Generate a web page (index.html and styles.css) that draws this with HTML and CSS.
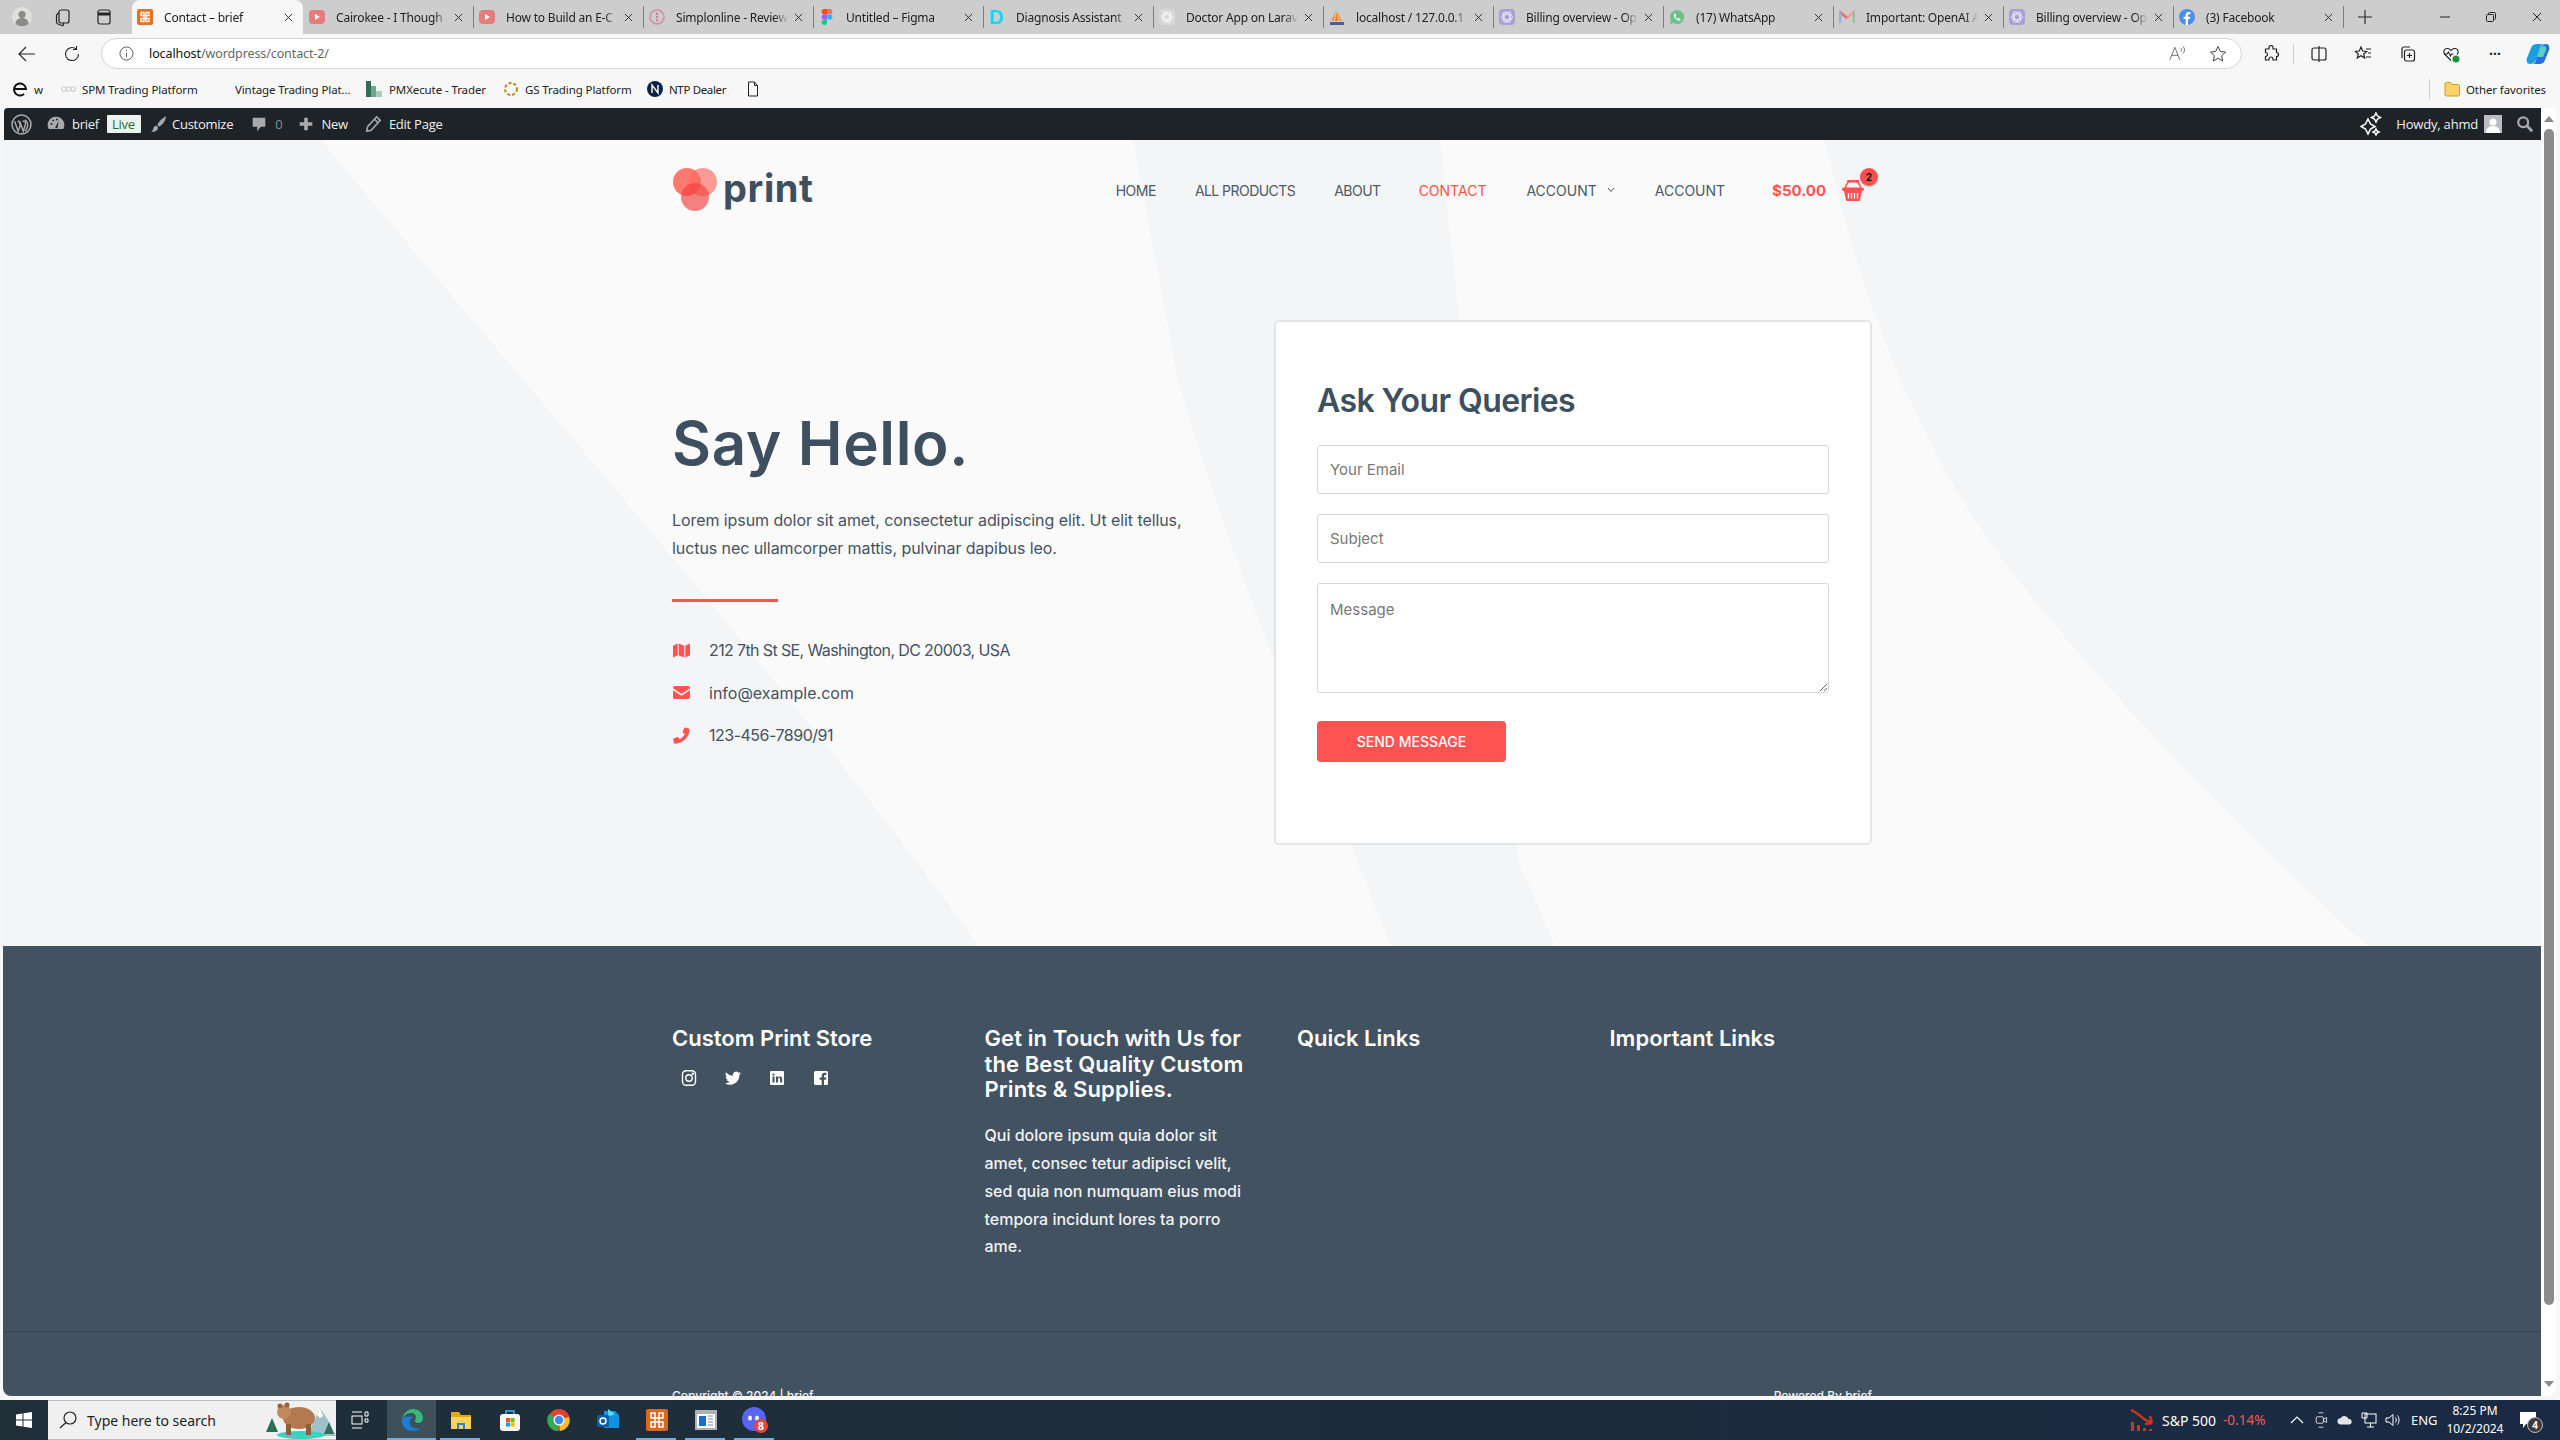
FILE: index.html
```html
<!DOCTYPE html>
<html lang="en">
<head>
<meta charset="utf-8">
<title>Contact – brief</title>
<link rel="stylesheet" href="styles.css">
</head>
<body>
<svg class="defs" width="0" height="0" aria-hidden="true">
  <symbol id="yt" viewBox="0 0 16 16"><rect x="0" y="1" width="16" height="14" rx="4" fill="#e57b7b"/><path d="M6 5l5 3-5 3z" fill="#fff"/></symbol>
  <symbol id="gpt" viewBox="0 0 16 16"><rect width="16" height="16" rx="4" fill="currentColor"/><g fill="none" stroke="#fff" stroke-width="1" opacity=".75"><ellipse cx="8" cy="8" rx="5.5" ry="2.8"/><ellipse cx="8" cy="8" rx="5.5" ry="2.8" transform="rotate(60 8 8)"/><ellipse cx="8" cy="8" rx="5.5" ry="2.8" transform="rotate(120 8 8)"/></g></symbol>
  <symbol id="x" viewBox="0 0 10 10"><path d="M1 1l8 8M9 1l-8 8" stroke="#222" stroke-width="1" fill="none"/></symbol>
</svg>
<div class="app">
  <div class="tabstrip">
    <div class="strip-tools">
      <svg class="ic20" viewBox="0 0 20 20"><circle cx="10" cy="10" r="10" fill="#e0e0dc"/><circle cx="10" cy="7.5" r="3.6" fill="#8a8a86"/><path d="M3.5 17c0-4 3-6 6.500-6s6.500 2 6.500 6a10 10 0 0 1-13 0z" fill="#8a8a86"/></svg>
      <svg class="ic20" viewBox="0 0 20 20" fill="none" stroke="#222" stroke-width="1.200"><rect x="6" y="3" width="10" height="13" rx="2"/><path d="M6 5.500L3.500 8v7c0 1 .6 1.700 1.500 2l4 1.500c1 .3 1.500-.2 1.500-1V16"/></svg>
      <svg class="ic20" viewBox="0 0 20 20" fill="none" stroke="#222" stroke-width="1.200"><rect x="4" y="3" width="12" height="14" rx="2"/><path d="M4 7h12" stroke-width="3"/></svg>
    </div>
    <div class="tab tab-active"><svg class="fav" viewBox="0 0 16 16"><rect width="16" height="16" rx="2" fill="#e9701f"/><path d="M4 3.500h3v3H4zM9 3.500h3v3H9zM4 9.500h3v3H4zM9 9.500h3v3H9zM7 6.500h2v3H7z" fill="none" stroke="#fff" stroke-width="1.300"/></svg><span class="tab-title">Contact – brief</span><svg class="tab-x" viewBox="0 0 10 10"><use href="#x"/></svg></div>
    <div class="tab"><svg class="fav" viewBox="0 0 16 16"><use href="#yt"/></svg><span class="tab-title">Cairokee - I Though</span><svg class="tab-x" viewBox="0 0 10 10"><use href="#x"/></svg></div>
    <div class="tab tab-sep"><svg class="fav" viewBox="0 0 16 16"><use href="#yt"/></svg><span class="tab-title">How to Build an E-C</span><svg class="tab-x" viewBox="0 0 10 10"><use href="#x"/></svg></div>
    <div class="tab tab-sep"><svg class="fav" viewBox="0 0 16 16"><circle cx="8" cy="8" r="7" fill="none" stroke="#d98aa0" stroke-width="1.500"/><circle cx="8" cy="4.800" r="1" fill="#c96a88"/><circle cx="8" cy="8" r="1" fill="#c96a88"/><circle cx="8" cy="11.200" r="1" fill="#c96a88"/></svg><span class="tab-title">Simplonline - Review</span><svg class="tab-x" viewBox="0 0 10 10"><use href="#x"/></svg></div>
    <div class="tab tab-sep"><svg class="fav" viewBox="0 0 12 18"><path d="M3 0h3v6H3a3 3 0 0 1 0-6z" fill="#f24e1e"/><path d="M6 0h3a3 3 0 0 1 0 6H6z" fill="#ff7262"/><path d="M3 6h3v6H3a3 3 0 0 1 0-6z" fill="#a259ff"/><circle cx="9" cy="9" r="3" fill="#1abcfe"/><path d="M3 12h3v3a3 3 0 1 1-3-3z" fill="#0acf83"/></svg><span class="tab-title">Untitled – Figma</span><svg class="tab-x" viewBox="0 0 10 10"><use href="#x"/></svg></div>
    <div class="tab tab-sep"><span class="fav fav-d">D</span><span class="tab-title">Diagnosis Assistant</span><svg class="tab-x" viewBox="0 0 10 10"><use href="#x"/></svg></div>
    <div class="tab tab-sep"><svg class="fav fav-grey" viewBox="0 0 16 16"><use href="#gpt"/></svg><span class="tab-title">Doctor App on Larav</span><svg class="tab-x" viewBox="0 0 10 10"><use href="#x"/></svg></div>
    <div class="tab tab-sep"><svg class="fav" viewBox="0 0 16 16"><path d="M7 1L2 12h3zM8 1l5 11h-3z" fill="#f39c2c"/><path d="M7.500 3L6 12h3z" fill="#e8732c"/><path d="M1 13h14v3H1z" fill="#4a5d9b"/></svg><span class="tab-title">localhost / 127.0.0.1</span><svg class="tab-x" viewBox="0 0 10 10"><use href="#x"/></svg></div>
    <div class="tab tab-sep"><svg class="fav fav-purple" viewBox="0 0 16 16"><use href="#gpt"/></svg><span class="tab-title">Billing overview - Op</span><svg class="tab-x" viewBox="0 0 10 10"><use href="#x"/></svg></div>
    <div class="tab tab-sep"><svg class="fav" viewBox="0 0 16 16"><path d="M8 1a7 7 0 0 0-6 10.500L1 15l3.600-1A7 7 0 1 0 8 1z" fill="#6cc18a"/><path d="M5.500 4.500c-1 1-1 2.500.5 4.500s3.500 3 5 2.500l.6-1.500-2-1-.8.800c-1-.4-2-1.400-2.400-2.400l.8-.8-1-2z" fill="#fff"/></svg><span class="tab-title">(17) WhatsApp</span><svg class="tab-x" viewBox="0 0 10 10"><use href="#x"/></svg></div>
    <div class="tab tab-sep"><svg class="fav" viewBox="0 0 16 16"><path d="M1 14V3l7 6 7-6v11" fill="none" stroke="#e7a09a" stroke-width="2.400"/><path d="M1 3l7 6" stroke="#e57368" stroke-width="2.400"/><path d="M15 3v11" stroke="#8fc29b" stroke-width="2.400"/><path d="M1 3v11" stroke="#8fb0e8" stroke-width="2.400"/></svg><span class="tab-title">Important: OpenAI A</span><svg class="tab-x" viewBox="0 0 10 10"><use href="#x"/></svg></div>
    <div class="tab tab-sep"><svg class="fav fav-purple" viewBox="0 0 16 16"><use href="#gpt"/></svg><span class="tab-title">Billing overview - Op</span><svg class="tab-x" viewBox="0 0 10 10"><use href="#x"/></svg></div>
    <div class="tab tab-sep"><svg class="fav" viewBox="0 0 16 16"><circle cx="8" cy="8" r="8" fill="#4d8fe8"/><path d="M9 16v-6h2l.3-2.300H9V6.300c0-.7.3-1.100 1.200-1.100h1.200V3.100C11 3 10.300 3 9.700 3 7.900 3 6.700 4.100 6.700 6v1.700h-2V10h2v6z" fill="#fff"/></svg><span class="tab-title">(3) Facebook</span><svg class="tab-x" viewBox="0 0 10 10"><use href="#x"/></svg></div>
    <div class="tab-new tab-sep"><svg viewBox="0 0 16 16" class="ic16"><path d="M8 1v14M1 8h14" stroke="#222" stroke-width="1.100"/></svg></div>
    <div class="win-btns">
      <svg class="ic10" viewBox="0 0 10 10"><path d="M0 5h10" stroke="#222"/></svg>
      <svg class="ic10" viewBox="0 0 10 10" fill="none" stroke="#222"><rect x=".5" y="2.500" width="7" height="7" rx="1"/><path d="M2.500 2.500V1.500a1 1 0 0 1 1-1h5a1 1 0 0 1 1 1v5a1 1 0 0 1-1 1"/></svg>
      <svg class="ic10" viewBox="0 0 10 10"><use href="#x"/></svg>
    </div>
  </div>

  <div class="toolbar">
    <svg class="tool tool-back" viewBox="0 0 18 18" fill="none" stroke="#222" stroke-width="1.100"><path d="M17 9H1M8 2L1 9l7 7"/></svg>
    <svg class="tool tool-reload" viewBox="0 0 18 18" fill="none" stroke="#222" stroke-width="1.100"><path d="M15.500 9A6.500 6.500 0 1 1 13 3.900"/><path d="M13.500 1v3.500H10"/></svg>
    <div class="urlbar">
      <svg class="url-info" viewBox="0 0 16 16" fill="none" stroke="#555"><circle cx="8" cy="8" r="7"/><path d="M8 7v5M8 4v1.500"/></svg>
      <span class="url"><span class="url-host">localhost</span>/wordpress/contact-2/</span>
      <svg class="url-read" viewBox="0 0 20 18" fill="none" stroke="#666" stroke-width="1"><path d="M1 16L6.500 2 12 16M3 11h7"/><path d="M13 3c1.500 1 1.500 3 0 4M15 1c3 2 3 6 0 8"/></svg>
      <svg class="url-star" viewBox="0 0 18 18" fill="none" stroke="#444"><path d="M9 1.500l2.300 5 5.300.6-4 3.600 1.100 5.300L9 13.300 4.300 16l1.100-5.300-4-3.600 5.300-.6z"/></svg>
    </div>
    <div class="tool-group">
      <svg class="ic18" viewBox="0 0 18 18" fill="none" stroke="#222" stroke-width="1.200"><path d="M7 2.500a2 2 0 0 1 4 0V4h3.500v3.500a2 2 0 0 1 0 4V15H11v-1a2 2 0 0 0-4 0v1H3.500v-3.500a2 2 0 0 0 0-4V4H7z"/></svg>
      <span class="tool-sep"></span>
      <svg class="ic18" viewBox="0 0 18 18" fill="none" stroke="#222" stroke-width="1.200"><rect x="2" y="3" width="14" height="12" rx="2"/><path d="M9 1v16"/></svg>
      <svg class="ic18" viewBox="0 0 18 18" fill="none" stroke="#222" stroke-width="1.200"><path d="M7 2l1.700 4 4 .4-3 2.600 1 4-3.700-2.200L3.300 13l1-4-3-2.600 4-.4zM12 4h5M14 8h3M12 12h5"/></svg>
      <svg class="ic18" viewBox="0 0 18 18" fill="none" stroke="#222" stroke-width="1.200"><path d="M4 13V4c0-1 .8-2 2-2h6"/><rect x="6.500" y="5" width="10" height="11" rx="2"/><path d="M11.500 8v5M9 10.500h5"/></svg>
      <svg class="ic18" viewBox="0 0 18 18" fill="none" stroke="#222" stroke-width="1.100"><path d="M9 15.500L3 9.500C1 7.500 1.500 4 4.500 3.500 6.500 3.200 8 4 9 5.500c1-1.500 2.500-2.300 4.500-2 3 .5 3.500 4 1.500 6"/><path d="M2 9h3l1.500-2 2 4 1-2h2"/><circle cx="14" cy="14" r="3.500" fill="#1f8f3a" stroke="none"/></svg>
      <span class="tool-dots">···</span>
      <svg class="ic24" viewBox="0 0 24 24"><path d="M5 6c1-3 3-4 6-4h7c-2 0-3 1-4 4l-3 9c-1 4-3 7-7 7-3 0-4-3-3-6z" fill="#1aa0e0"/><path d="M19 18c-1 3-3 4-6 4H6c2 0 3-1 4-4l3-9c1-4 3-7 7-7 3 0 4 3 3 6z" fill="#2a6fe0"/><path d="M14 6l-3 9h6l3-7c.5-2-.5-4-2-4-2 0-3 1-4 2z" fill="#5fd0c0"/></svg>
    </div>
  </div>

  <div class="bookmarks">
    <svg class="ic16" viewBox="0 0 16 16" fill="none" stroke="#111" stroke-width="2"><path d="M2 8h12a6 6 0 1 0-2 5"/></svg>
    <span class="bm bm-w">w</span>
    <svg class="bm-ic bm-spm" viewBox="0 0 16 8" fill="none" stroke="#cfcfcf" stroke-width="1.200"><circle cx="3" cy="4" r="2.400"/><circle cx="8" cy="4" r="2.400"/><circle cx="13" cy="4" r="2.400"/></svg>
    <span class="bm bm-spmt">SPM Trading Platform</span>
    <span class="bm bm-vin">Vintage Trading Plat...</span>
    <svg class="bm-ic" viewBox="0 0 16 16"><path d="M0 0h5v16H0z" fill="#2f6f58"/><path d="M5 5h5v11H5z" fill="#6fa58e"/><path d="M10 10h6v6h-6z" fill="#a9cbbb"/></svg>
    <span class="bm bm-pmx">PMXecute - Trader</span>
    <svg class="bm-ic" viewBox="0 0 16 16" fill="none" stroke="#b98a22" stroke-width="2" stroke-dasharray="3 2"><circle cx="8" cy="8" r="6"/></svg>
    <span class="bm bm-gs">GS Trading Platform</span>
    <svg class="bm-ic" viewBox="0 0 16 16"><circle cx="8" cy="8" r="8" fill="#0e2246"/><path d="M5 12V4l6 8V4" fill="none" stroke="#fff" stroke-width="1.400"/></svg>
    <span class="bm bm-ntp">NTP Dealer</span>
    <svg class="ic16 bm-doc" viewBox="0 0 16 16" fill="none" stroke="#222"><path d="M3.500 1h6l3 3.500V15h-9zM9.500 1v3.500h3"/></svg>
    <span class="tool-sep bm-sep"></span>
    <svg class="ic16" viewBox="0 0 16 16"><path d="M1 3c0-1 .5-1.500 1.500-1.500h4L8 3.500h6c1 0 1.500.5 1.500 1.500v8.500c0 1-.5 1.500-1.500 1.500H2.500C1.500 15 1 14.500 1 13.500z" fill="#fbd36b" stroke="#c99a1f"/></svg>
    <span class="bm bm-other">Other favorites</span>
  </div>

  <div class="viewport">
    <div class="webview">
      <div class="adminbar">
        <svg class="ab-wp" viewBox="0 0 20 20"><circle cx="10" cy="10" r="9" fill="none" stroke="#a7aaad" stroke-width="1.500"/><path d="M3.500 7l3.300 9.500 2-5.800L7.500 7H6.300M8.300 7l3.400 9.500 2-6.500c.5-1.500-.2-3-1.300-3H11M13.500 5.500c2.300 2 3 5 1.700 8l-1.500 3" fill="none" stroke="#a7aaad" stroke-width="1.400"/></svg>
        <svg class="ab-ic ab-dash" viewBox="0 0 20 20"><path d="M10 2a9 9 0 0 0-8 13.500h16A9 9 0 0 0 10 2z" fill="#a7aaad"/><circle cx="5" cy="10" r="1" fill="#1d2327"/><circle cx="7" cy="6" r="1" fill="#1d2327"/><circle cx="11" cy="5" r="1" fill="#1d2327"/><path d="M9 14l4-7-1.500 8z" fill="#1d2327"/></svg>
        <span class="ab-t ab-brief">brief</span>
        <span class="ab-live">Live</span>
        <svg class="ab-ic ab-brush" viewBox="0 0 20 20"><path d="M18 1c-4 2-8 6-10 10l2 2c4-2 7-6 8-12zM7 12c-3 0-3 3-4 5-.5 1-1.500 1-2 1 4 1.500 8 0 8-4z" fill="#a7aaad"/></svg>
        <span class="ab-t ab-cust">Customize</span>
        <svg class="ab-ic ab-com" viewBox="0 0 20 20"><path d="M3 3h14v10h-5l-4 5v-5H3z" fill="#a7aaad"/></svg>
        <span class="ab-t ab-zero">0</span>
        <svg class="ab-ic ab-plus" viewBox="0 0 20 20"><path d="M8 3h4v5h5v4h-5v5H8v-5H3V8h5z" fill="#a7aaad"/></svg>
        <span class="ab-t ab-new">New</span>
        <svg class="ab-ic ab-pen" viewBox="0 0 20 20"><path d="M14 2l4 4-10 11-5 1 1-5zM12 5l3 3" fill="none" stroke="#a7aaad" stroke-width="1.800"/></svg>
        <span class="ab-t ab-edit">Edit Page</span>
        <svg class="ab-spark" viewBox="0 0 22 24" fill="none" stroke="#fff" stroke-width="1.500"><path d="M8 7l2.500 5L15 14.500 10.500 17 8 22l-2.500-5L1 14.500 5.500 12zM16 1l1.500 3L20.500 5.500 17.500 7 16 10l-1.500-3-3-1.500 3-1.500zM16 17l1 2 2 1-2 1-1 2-1-2-2-1 2-1z"/></svg>
        <span class="ab-t ab-howdy">Howdy, ahmd</span>
        <svg class="ab-av" viewBox="0 0 18 18"><rect width="18" height="18" fill="#b9bcc0"/><circle cx="9" cy="7" r="3.500" fill="#fff"/><path d="M2 18c0-5 3-7 7-7s7 2 7 7z" fill="#fff"/></svg>
        <svg class="ab-ic ab-search" viewBox="0 0 20 20" fill="none" stroke="#a7aaad" stroke-width="2.500"><circle cx="8" cy="8" r="5.500"/><path d="M12 12l6 6" stroke-width="3"/></svg>
      </div>
      <div class="site">
        <section class="hero">
          <svg class="hero-bg" viewBox="0 140 2538 806" preserveAspectRatio="none" aria-hidden="true">
            <path class="shape" d="M0 140H318C500 360 800 700 976 946H0z"/>
            <path class="shape" d="M1130 140L1175 380Q1240 600 1348 845L1388 946H1552L1515 860Q1465 400 1437 140z"/>
            <path class="shape" d="M1822 140Q1880 400 2000 560T2364 946H2538V140z"/>
          </svg>
          <div class="container hero-inner">
            <header class="site-head">
              <a class="logo">
                <svg class="logo-mark" viewBox="0 0 46 43"><circle cx="15" cy="14" r="14" fill="#ff5a4e" opacity=".8"/><circle cx="31" cy="14" r="14" fill="#ff6a60" opacity=".65"/><circle cx="23" cy="29" r="14" fill="#f0403c" opacity=".65"/></svg>
                <span class="logo-text">print</span>
              </a>
              <nav class="nav">
                <a class="nav-home">HOME</a>
                <a class="nav-all">ALL PRODUCTS</a>
                <a class="nav-about">ABOUT</a>
                <a class="nav-contact">CONTACT</a>
                <a class="nav-acc">ACCOUNT <svg class="chev" viewBox="0 0 8 6" fill="none" stroke="#45525f"><path d="M1 1l3 3.500L7 1"/></svg></a>
                <a class="nav-acc2">ACCOUNT</a>
                <span class="price">$50.00</span>
                <span class="cart">
                  <svg class="cart-ic" viewBox="0 0 22 21"><path d="M3 9C4 3 7 1 11 1s7 2 8 8" fill="none" stroke="#ff5252" stroke-width="1.600"/><rect x="5" y="0" width="12" height="2.400" rx="1.200" fill="#ff5252"/><rect y="7.500" width="22" height="3.500" rx="1.700" fill="#ff5252"/><path d="M2 11h18l-2 9a1 1 0 0 1-1 1H5a1 1 0 0 1-1-1z" fill="#ff5252"/><path d="M6.500 13v5.500M9.500 13v5.500M12.500 13v5.500M15.500 13v5.500" stroke="#fff" stroke-width="1.300"/></svg>
                  <span class="cart-badge">2</span>
                </span>
              </nav>
            </header>
            <div class="contact">
              <div class="info">
                <h1>Say Hello.</h1>
                <p class="info-p">Lorem ipsum dolor sit amet, consectetur adipiscing elit. Ut elit tellus,<br>luctus nec ullamcorper mattis, pulvinar dapibus leo.</p>
                <div class="rule"></div>
                <ul class="rows">
                  <li class="row-addr"><svg class="row-ic" viewBox="0 0 18 16"><path d="M0 3l5-2.500V13L0 15.500zM6 .5l6 2.500v12.500L6 13zM13 3l5-2.500V13l-5 2.500z" fill="#ff5252"/></svg>212 7th St SE, Washington, DC 20003, USA</li>
                  <li><svg class="row-ic" viewBox="0 0 18 16"><path d="M2 1h14a2 2 0 0 1 2 2v.6L9 9.500 0 3.600V3a2 2 0 0 1 2-2zM0 5.500l9 6 9-6V13a2 2 0 0 1-2 2H2a2 2 0 0 1-2-2z" fill="#ff5252"/></svg>info@example.com</li>
                  <li class="row-phone"><svg class="row-ic" viewBox="0 0 18 18"><path d="M16.500 1.500L13 .5c-.5 0-1 .2-1.200.7l-1.500 3.600c-.2.500 0 1 .4 1.300l1.800 1.500a11 11 0 0 1-5.300 5.300L5.700 11c-.3-.4-.8-.6-1.300-.4L.8 12.200c-.5.200-.7.700-.7 1.200l1 3.500c.1.500.6.800 1 .8C10.500 17.700 17.500 10.700 17.500 2.500c0-.5-.4-.9-1-1z" fill="#ff5252"/></svg>123-456-7890/91</li>
                </ul>
              </div>
              <form class="card">
                <h2>Ask Your Queries</h2>
                <input class="field" type="text" placeholder="Your Email">
                <input class="field" type="text" placeholder="Subject">
                <textarea class="field field-area" placeholder="Message"></textarea>
                <button class="send" type="button">SEND MESSAGE</button>
              </form>
            </div>
          </div>
        </section>
        <footer class="footer">
          <div class="foot-main">
            <div class="container foot-grid">
              <div>
                <h3>Custom Print Store</h3>
                <div class="socials">
                  <svg class="soc" viewBox="0 0 16 16" fill="none" stroke="#fff" stroke-width="1.400"><rect x="1.500" y=".7" width="13" height="14.600" rx="3.500"/><circle cx="8" cy="8" r="3.200"/><circle cx="11.800" cy="3.800" r=".5" fill="#fff"/></svg>
                  <svg class="soc" viewBox="0 0 16 16"><path d="M16 3.200c-.6.300-1.200.4-1.900.5.700-.4 1.200-1 1.400-1.800-.6.400-1.300.6-2 .8A3.300 3.300 0 0 0 7.900 5.700 9.300 9.300 0 0 1 1.100 2.200 3.300 3.300 0 0 0 2.100 6.600c-.5 0-1-.2-1.500-.4 0 1.600 1.100 3 2.600 3.300-.5.100-1 .1-1.500 0 .4 1.300 1.600 2.200 3.100 2.300A6.600 6.600 0 0 1 0 13.200a9.300 9.300 0 0 0 14.300-8.300c.7-.4 1.200-1 1.700-1.700z" fill="#fff"/></svg>
                  <svg class="soc" viewBox="0 0 16 16"><path d="M2 1h12a1 1 0 0 1 1 1v12a1 1 0 0 1-1 1H2a1 1 0 0 1-1-1V2a1 1 0 0 1 1-1z" fill="#fff"/><path d="M3.500 6.500h2v6h-2zM3.500 3.800h2v1.600h-2zM7 6.500h2v1c.4-.7 1.100-1.100 2-1.100 1.500 0 2.200 1 2.200 2.600v3.500h-2V9.300c0-.8-.3-1.200-.9-1.200-.7 0-1.300.5-1.300 1.300v3.100H7z" fill="#435261"/></svg>
                  <svg class="soc" viewBox="0 0 16 16"><path d="M2.500 1h11A1.500 1.500 0 0 1 15 2.500v11a1.500 1.500 0 0 1-1.500 1.500H11V9.800h2l.3-2.300H11V6c0-.7.3-1.100 1.200-1.100h1.200V2.900c-.4 0-1-.1-1.700-.1C10 2.800 8.700 4 8.700 5.800v1.700H6.600v2.300h2.100V15H2.500A1.500 1.500 0 0 1 1 13.500v-11A1.500 1.500 0 0 1 2.500 1z" fill="#fff"/></svg>
                </div>
              </div>
              <div>
                <h3 class="h3-wide">Get in Touch with Us for<br>the Best Quality Custom<br>Prints &amp; Supplies.</h3>
                <p class="foot-p">Qui dolore ipsum quia dolor sit<br>amet, consec tetur adipisci velit,<br>sed quia non numquam eius modi<br>tempora incidunt lores ta porro<br>ame.</p>
              </div>
              <div><h3>Quick Links</h3></div>
              <div><h3>Important Links</h3></div>
            </div>
          </div>
          <div class="container foot-bottom">
            <span>Copyright © 2024 | brief</span>
            <span>Powered By brief</span>
          </div>
        </footer>
      </div>
    </div>
    <div class="scrollbar">
      <span class="sb-up"></span>
      <span class="sb-thumb"></span>
      <span class="sb-down"></span>
    </div>
  </div>

  <div class="taskbar">
    <div class="start"><svg class="ic16" viewBox="0 0 16 16"><path d="M0 2.500l6.500-1v6H0zM7.500 1.300L16 0v7.500H7.500zM0 8.500h6.500v6L0 13.500zM7.500 8.500H16V16l-8.500-1.300z" fill="#fff"/></svg></div>
    <div class="search">
      <svg class="search-ic" viewBox="0 0 18 18" fill="none" stroke="#222" stroke-width="1.200"><circle cx="11" cy="7" r="6"/><path d="M7 11.500L1 17"/></svg>
      <span class="search-t">Type here to search</span>
      <svg class="bear" viewBox="0 0 70 40">
        <path d="M44 30L54 8l8 12 8 16H40z" fill="#9fc0c8"/><path d="M54 8l3 8-3 2-3-3z" fill="#fff"/><path d="M0 32L6 18l6 14z" fill="#2c6e57"/><path d="M58 34l5-12 5 12z" fill="#2c6e57"/>
        <ellipse cx="35" cy="35" rx="24" ry="4" fill="#3ed0c0"/>
        <ellipse cx="33" cy="18" rx="16" ry="11" fill="#b27a4e"/><ellipse cx="18" cy="12" rx="7" ry="7" fill="#c08a5c"/><circle cx="14" cy="6" r="2.500" fill="#9a6339"/><circle cx="21" cy="5" r="2.500" fill="#9a6339"/>
        <path d="M20 24h5v11h-5zM40 24h5v11h-5z" fill="#8f5d36"/>
      </svg>
    </div>
    <div class="task-view"><svg class="ic18" viewBox="0 0 18 18" fill="none" stroke="#fff"><path d="M1 1h10M1 17h10"/><rect x="1" y="5" width="10" height="8"/><path d="M14 1h3v4h-3zM14 8h3v3h-3z"/></svg></div>
    <div class="task task-on open"><svg class="ic24" viewBox="0 0 24 24"><path d="M2 13C2 6 7 1 13 1c6 0 10 4 10 9 0 3-2 5-5 5-2 0-3-1-3-2 0-2 1-2 1-4s-2-4-5-4C7 5 2 8 2 13z" fill="#39b87c"/><path d="M2 13c0 6 5 10 11 10 3 0 6-1 8-3-3 1-9 1-11-3-1-3 0-7 4-8C8 8 2 8 2 13z" fill="#1c7ed6"/></svg></div>
    <div class="task open"><svg class="ic24" viewBox="0 0 24 24"><path d="M2 4h8l2 3h10v3H2z" fill="#e3a714"/><path d="M2 9h20v12H2z" fill="#fbd35b"/><path d="M8 15h8v6h-2v-4h-4v4H8z" fill="#2a7fd6"/></svg></div>
    <div class="task"><svg class="ic24" viewBox="0 0 24 24"><path d="M8 6V3h8v3" fill="none" stroke="#2196d8" stroke-width="2"/><rect x="2" y="6" width="20" height="17" rx="3" fill="#f6f6f6"/><path d="M8 10h4v4H8z" fill="#f25022"/><path d="M12.500 10h4v4h-4z" fill="#7fba00"/><path d="M8 14.500h4v4H8z" fill="#00a4ef"/><path d="M12.500 14.500h4v4h-4z" fill="#ffb900"/></svg></div>
    <div class="task"><svg class="ic24" viewBox="0 0 24 24"><circle cx="12" cy="12" r="11" fill="#db4437"/><path d="M12 12L22 9a11 11 0 0 1-9 14z" fill="#fbc02d"/><path d="M12 12l-1 11A11 11 0 0 1 2 6z" fill="#34a853"/><circle cx="12" cy="12" r="5.500" fill="#fff"/><circle cx="12" cy="12" r="4.200" fill="#4285f4"/></svg></div>
    <div class="task"><svg class="ic24" viewBox="0 0 24 24"><path d="M8 3h11l4 4v13H8z" fill="#1490df"/><path d="M12 1l7 5-7 3z" fill="#50d9ff"/><rect x="1" y="7" width="12" height="12" rx="1" fill="#0a5ea8"/><circle cx="7" cy="13" r="3" fill="none" stroke="#fff" stroke-width="1.500"/></svg></div>
    <div class="task open"><svg class="ic24" viewBox="0 0 24 24"><rect x="1" y="1" width="22" height="22" rx="2" fill="#d9691e"/><path d="M6 5h4v5H6zM14 5h4v5h-4zM6 14h4v5H6zM14 14h4v5h-4zM10 10h4v4h-4z" fill="none" stroke="#fff" stroke-width="1.500"/></svg></div>
    <div class="task open"><svg class="ic24" viewBox="0 0 24 24"><rect x="1" y="2" width="22" height="20" fill="#a9b3bb"/><rect x="3" y="6" width="18" height="14" fill="#fff"/><rect x="5" y="8" width="7" height="10" fill="#1a6fc9"/><path d="M14 8h5M14 11h5M14 14h5M14 17h5" stroke="#7b8a96"/></svg></div>
    <div class="task open"><svg class="ic26" viewBox="0 0 26 28"><circle cx="12" cy="13" r="12" fill="#5865f2"/><ellipse cx="8" cy="12" rx="2" ry="2.500" fill="#fff"/><ellipse cx="15" cy="12" rx="2" ry="2.500" fill="#fff"/><circle cx="19" cy="20" r="7" fill="#e8453c"/><text class="disc-n" x="19" y="24">8</text></svg></div>
    <div class="tray">
      <svg class="tray-trend" viewBox="0 0 24 22"><path d="M1 1l7 4 6 5 8 4M22 14l-7 1M22 14l-2-7" fill="none" stroke="#c7381c" stroke-width="2.500"/><path d="M1 13h3v9H1zM7 16h3v6H7zM13 19h3v3h-3zM19 20h3v2h-3z" fill="#c7381c"/></svg>
      <span class="tray-t tray-sp">S&amp;P 500</span>
      <span class="tray-t tray-red">-0.14%</span>
      <svg class="ic14 tray-chev" viewBox="0 0 14 14" fill="none" stroke="#fff" stroke-width="1.200"><path d="M1 10l6-6 6 6"/></svg>
      <svg class="ic16 tray-i" viewBox="0 0 16 20" fill="none" stroke="#fff"><path d="M5 1h6M5 19h6"/><rect x="2" y="6" width="9" height="8" rx="1.500"/><path d="M11 9l4-2v6l-4-2"/></svg>
      <svg class="ic16 tray-i" viewBox="0 0 18 12"><path d="M4 11a3.500 3.500 0 0 1 0-7 5 5 0 0 1 9 1 3 3 0 0 1 1 6z" fill="#e5e5e5"/></svg>
      <svg class="ic16 tray-i" viewBox="0 0 16 16" fill="none" stroke="#fff"><rect x="4" y="2" width="11" height="9"/><path d="M1 1h5v5H1zM9.500 11v4M6 15h7"/></svg>
      <svg class="ic16 tray-i" viewBox="0 0 16 16" fill="none" stroke="#fff"><path d="M1 6v4h3l4 3.500v-11L4 6zM10.500 5.500c1 1.500 1 3.500 0 5M12.500 3.500c2 2.500 2 6.500 0 9"/></svg>
      <span class="tray-t tray-eng">ENG</span>
      <div class="clock"><span>8:25 PM</span><span>10/2/2024</span></div>
      <span class="notif">
        <svg class="ic16" viewBox="0 0 16 16"><path d="M0 0h16v12H6l-3 4v-4H0z" fill="#fff"/></svg>
        <span class="notif-n">4</span>
      </span>
    </div>
  </div>
</div>
</body>
</html>
```

FILE: styles.css
```css
* { box-sizing: border-box; }
html, body { margin: 0; padding: 0; }
body { width: 2560px; height: 1440px; overflow: hidden; background: #f7f7f7; font-family: "Noto Sans", "Open Sans", sans-serif; color: #222; }
.defs { position: absolute; }
svg { display: block; flex: none; }
.ic10 { width: 10px; height: 10px; }
.ic14 { width: 14px; height: 14px; }
.ic16 { width: 16px; height: 16px; }
.ic18 { width: 18px; height: 18px; }
.ic20 { width: 20px; height: 20px; }
.ic24 { width: 24px; height: 24px; }
.ic26 { width: 26px; height: 28px; }

.app { width: 2560px; height: 1440px; display: flex; flex-direction: column; }

/* tab strip */
.tabstrip { height: 34px; flex: none; display: flex; align-items: stretch; background: #cdcdcd; }
.strip-tools { width: 132px; flex: none; display: flex; align-items: center; gap: 21px; padding-left: 12px; }
.tab { width: 170px; flex: none; display: flex; align-items: center; padding: 0 10px 0 6px; font-size: 12px; color: #222; position: relative; }
.tab-active { width: 171px; background: #f7f7f7; border-radius: 8px 8px 0 0; padding-left: 5px; }
.tab-sep::before { content: ""; position: absolute; left: 0; top: 6px; bottom: 6px; width: 1px; background: #7d7d7d; }
.fav { width: 16px; height: 16px; margin-right: 11px; flex: none; }
.fav-d { font: 700 20px/16px "Liberation Sans", sans-serif; color: #11d8f5; }
.fav-grey { color: #d8d8d8; }
.fav-purple { color: #a79fd6; }
.tab-title { flex: 1; min-width: 0; white-space: nowrap; -webkit-mask-image: linear-gradient(90deg, #000 88%, transparent); mask-image: linear-gradient(90deg, #000 88%, transparent); letter-spacing: -.2px; }
.tab-x { width: 9px; height: 9px; margin-left: 6px; flex: none; }
.tab-new { width: 44px; flex: none; display: flex; align-items: center; justify-content: center; position: relative; }
.win-btns { margin-left: auto; display: flex; align-items: center; gap: 36px; padding-right: 18px; }

/* toolbar */
.toolbar { height: 36px; flex: none; display: flex; align-items: center; background: #f7f7f7; padding-top: 3px; }
.tool { width: 18px; height: 18px; }
.tool-back { margin-left: 18px; }
.tool-reload { margin-left: 27px; }
.urlbar { margin-left: 20px; width: 2141px; height: 31px; flex: none; background: #fff; border: 1px solid #d3d3d3; border-radius: 16px; display: flex; align-items: center; padding: 0 14px 0 17px; }
.url-info { width: 15px; height: 15px; }
.url { margin-left: 15px; font-size: 12.500px; color: #666; letter-spacing: -.1px; }
.url-host { color: #111; }
.url-read { width: 18px; height: 17px; margin-left: auto; }
.url-star { width: 18px; height: 18px; margin-left: 22px; }
.tool-group { display: flex; align-items: center; margin-left: 20px; gap: 0; }
.tool-group > .ic18 { margin-right: 26px; }
.tool-group > .tool-sep { margin: 0 16px 0 -13px; }
.tool-sep { width: 1px; height: 20px; background: #d0d0d0; flex: none; }
.tool-dots { font-size: 14px; font-weight: 700; width: 18px; margin-right: 22px; text-align: center; }

/* bookmarks */
.bookmarks { height: 38px; flex: none; display: flex; align-items: center; background: #f7f7f7; padding-left: 12px; font-size: 11.500px; }
.bm { white-space: nowrap; letter-spacing: -.1px; }
.bm-ic { width: 16px; height: 16px; }
.bm-w { margin-left: 6px; }
.bm-spm { margin-left: 18px; height: 8px; width: 15px; }
.bm-spmt { margin-left: 6px; width: 153px; }
.bm-vin { width: 131px; }
.bm-pmx { margin-left: 7px; width: 114px; }
.bm-gs { margin-left: 6px; width: 122px; }
.bm-ntp { margin-left: 6px; width: 76px; letter-spacing: -.35px; }
.bm-sep { margin-left: auto; margin-right: 14px; }
.bm-other { margin-left: 6px; margin-right: 14px; }

/* viewport */
.viewport { flex: none; height: 1288px; display: flex; padding: 0 4px 0 3px; background: #f7f7f7; }
.webview { width: 2538px; flex: none; display: flex; flex-direction: column; overflow: hidden; border-radius: 0 0 0 8px; }
.scrollbar { width: 15px; flex: none; background: #fff; display: flex; flex-direction: column; align-items: center; border-radius: 0 0 8px 0; padding: 8px 0; }
.sb-up { width: 0; height: 0; border: 5px solid transparent; border-top: 0; border-bottom: 6px solid #8a8a8a; }
.sb-thumb { width: 10px; height: 1176px; background: #8b8b8b; border-radius: 5px; margin-top: 7px; }
.sb-down { width: 0; height: 0; border: 5px solid transparent; border-bottom: 0; border-top: 6px solid #8a8a8a; margin-top: auto; margin-bottom: 1px; }

/* admin bar */
.adminbar { height: 32px; flex: none; display: flex; align-items: center; background: #1d2327; color: #f0f0f1; font-size: 13px; margin-left: 1px; border-radius: 4px 0 0 0; }
.ab-t { white-space: nowrap; font-family: "Open Sans", sans-serif; letter-spacing: -.25px; }
.ab-ic { width: 18px; height: 18px; }
.ab-wp { width: 21px; height: 21px; margin-left: 7px; }
.ab-dash { margin-left: 15px; }
.ab-brief { margin-left: 7px; }
.ab-live { margin-left: 8px; background: #e9f2ec; color: #1a6e39; padding: 0 5px; height: 18px; line-height: 18px; font-family: "Open Sans", sans-serif; font-size: 13px; letter-spacing: -.25px; border-radius: 1px; width: 34px; }
.ab-brush { margin-left: 9px; }
.ab-cust { margin-left: 4px; }
.ab-com { margin-left: 17px; }
.ab-zero { margin-left: 7px; color: #8c8f94; }
.ab-plus { margin-left: 15px; }
.ab-new { margin-left: 6px; }
.ab-pen { margin-left: 16px; }
.ab-edit { margin-left: 7px; }
.ab-spark { width: 22px; height: 24px; margin-left: auto; }
.ab-howdy { margin-left: 14px; letter-spacing: -.2px; }
.ab-av { width: 18px; height: 18px; margin-left: 6px; }
.ab-search { margin-left: 14px; margin-right: 7px; }

/* site */
.site { flex: 1; min-height: 0; overflow: hidden; font-family: "Inter", sans-serif; }
.container { width: 1200px; margin: 0 auto; }
.hero { height: 806px; position: relative; background: #fafafb; overflow: hidden; }
.hero-bg { position: absolute; left: 0; top: 0; width: 100%; height: 100%; }
.shape { fill: #f4f5f6; }
.hero-inner { position: relative; }
.site-head { height: 100px; display: flex; align-items: center; }
.logo { display: flex; align-items: center; gap: 5px; margin-top: -2px; }
.logo-mark { width: 46px; height: 43px; }
.logo-text { font-size: 38px; font-weight: 700; line-height: 42px; color: #3e4f60; letter-spacing: .6px; margin-top: -2px; }
.nav { margin-left: auto; display: flex; align-items: center; font-size: 14px; color: #4b5866; }
.nav a { white-space: nowrap; display: flex; align-items: center; }
.nav-home { margin-right: 39px; letter-spacing: -.5px; }
.nav-all { margin-right: 39px; letter-spacing: -.55px; }
.nav-about { margin-right: 38px; letter-spacing: -.5px; }
.nav-contact { margin-right: 40px; color: #ff5240; }
.nav-acc { margin-right: 40px; gap: 10px; }
.chev { width: 8px; height: 6px; }
.nav-acc2 { margin-right: 47px; }
.price { color: #ff5252; font-size: 15px; font-weight: 700; }
.cart { display: block; position: relative; width: 22px; height: 21px; margin-left: 16px; margin-right: 8px; }
.cart-ic { width: 22px; height: 21px; }
.cart-badge { position: absolute; left: 18px; top: -12px; width: 18px; height: 18px; border-radius: 50%; background: #ff4e4e; color: #111; font-size: 10px; font-weight: 700; line-height: 18px; text-align: center; box-shadow: 0 1px 2px rgba(0,0,0,.2); }
.contact { display: grid; grid-template-columns: 1fr 598px; margin-top: 80px; }
.info { padding-top: 87px; color: #45525f; }
.info h1 { margin: 0; font-size: 60px; line-height: 72px; font-weight: 600; color: #3e4f60; letter-spacing: .7px; }
.info-p { margin: 27px 0 0; font-size: 16px; line-height: 28px; letter-spacing: -.08px; }
.rule { width: 106px; height: 3px; background: #ff5252; margin-top: 37px; }
.rows { list-style: none; margin: 36px 0 0; padding: 0; display: flex; flex-direction: column; gap: 18.500px; font-size: 16px; line-height: 24px; }
.rows li { display: flex; align-items: center; gap: 19px; padding-left: 1px; }
.row-addr { letter-spacing: -.62px; }
.row-phone { letter-spacing: -.5px; }
.row-ic { width: 17px; height: 17px; }
.card { height: 525px; background: #fff; border: 2px solid #e4e5e7; border-radius: 5px; padding: 58px 41px 0; display: flex; flex-direction: column; align-items: flex-start; }
.card h2 { margin: 0 0 25px; font-size: 32px; line-height: 40px; font-weight: 600; color: #3e4f60; letter-spacing: -.6px; position: relative; top: 1px; }
.field { width: 512px; height: 49px; flex: none; margin-bottom: 20px; padding: 0 12px; border: 1px solid #d6d6d6; border-radius: 3px; background: #fff; font: 15px "Inter", sans-serif; color: #333; outline: none; }
.field::placeholder { color: #787878; opacity: 1; }
.field-area { height: 110px; padding: 15px 12px; margin-bottom: 28px; line-height: 22px; }
.send { width: 189px; height: 41px; border: 0; border-radius: 4px; background: #ff5252; color: #fff; font: 500 14px "Inter", sans-serif; padding: 0; }

/* footer */
.footer { background: #435261; color: #fff; height: 600px; }
.foot-main { height: 386px; padding-top: 80px; border-bottom: 1px solid #36424f; }
.foot-grid { display: grid; grid-template-columns: repeat(4, 312.500px); }
.foot-grid h3 { margin: 0; font-size: 22px; line-height: 25.700px; font-weight: 600; }
.foot-grid .h3-wide { letter-spacing: .1px; }
.socials { display: flex; gap: 28px; padding-left: 9px; margin-top: 18px; }
.soc { width: 16px; height: 16px; }
.foot-p { margin: 19px 0 0; font-size: 16px; line-height: 27.800px; font-weight: 500; color: #f0f2f4; }
.foot-bottom { display: flex; justify-content: space-between; padding-top: 54px; font-size: 12px; line-height: 20px; font-weight: 500; color: #f0f2f4; }

/* taskbar */
.taskbar { margin-top: 4px; height: 40px; flex: none; display: flex; align-items: center; background: linear-gradient(90deg, #1f2f38, #1d2c3c 60%, #1a2a44); color: #fff; }
.start { width: 48px; height: 40px; display: flex; align-items: center; justify-content: center; flex: none; }
.search { width: 288px; height: 40px; flex: none; background: #f0f0f0; border-top: 1px solid #bdbdbd; border-bottom: 1px solid #bdbdbd; display: flex; align-items: center; color: #222; }
.search-ic { width: 18px; height: 18px; margin-left: 11px; }
.search-t { margin-left: 10px; font-size: 14px; }
.bear { width: 70px; height: 40px; margin-left: auto; }
.task-view { width: 51px; display: flex; justify-content: center; flex: none; padding-right: 4px; }
.task { width: 49px; height: 40px; flex: none; display: flex; align-items: center; justify-content: center; position: relative; }
.task.open::after { content: ""; position: absolute; left: 4px; right: 5px; bottom: 0; height: 2px; background: #6fb0de; }
.task-on { background: #3e5059; }
.task-on.open::after { left: 0; right: 0; }
.disc-n { fill: #fff; font: 700 11px "Noto Sans", sans-serif; text-anchor: middle; }
.tray { margin-left: auto; display: flex; align-items: center; height: 40px; flex: none; }
.tray-trend { width: 24px; height: 22px; }
.tray-t { font-size: 13px; white-space: nowrap; }
.tray-sp { margin-left: 8px; width: 61px; font-size: 14px; }
.tray-red { color: #ee5a5a; width: 67px; font-size: 13.500px; }
.tray-chev { margin-right: 9px; }
.tray-i { width: 16px; height: 16px; margin-right: 8px; }
.tray-eng { margin-left: 2px; width: 33px; }
.clock { width: 62px; display: flex; flex-direction: column; align-items: center; font-size: 12px; line-height: 18px; white-space: nowrap; }
.notif { position: relative; width: 16px; height: 16px; margin-left: 14px; margin-right: 24px; }
.notif-n { position: absolute; left: 7px; top: 5px; width: 16px; height: 16px; border-radius: 50%; background: #3b3b3b; border: 1px solid #bbb; font-size: 10px; line-height: 14px; text-align: center; font-weight: 700; }
```
